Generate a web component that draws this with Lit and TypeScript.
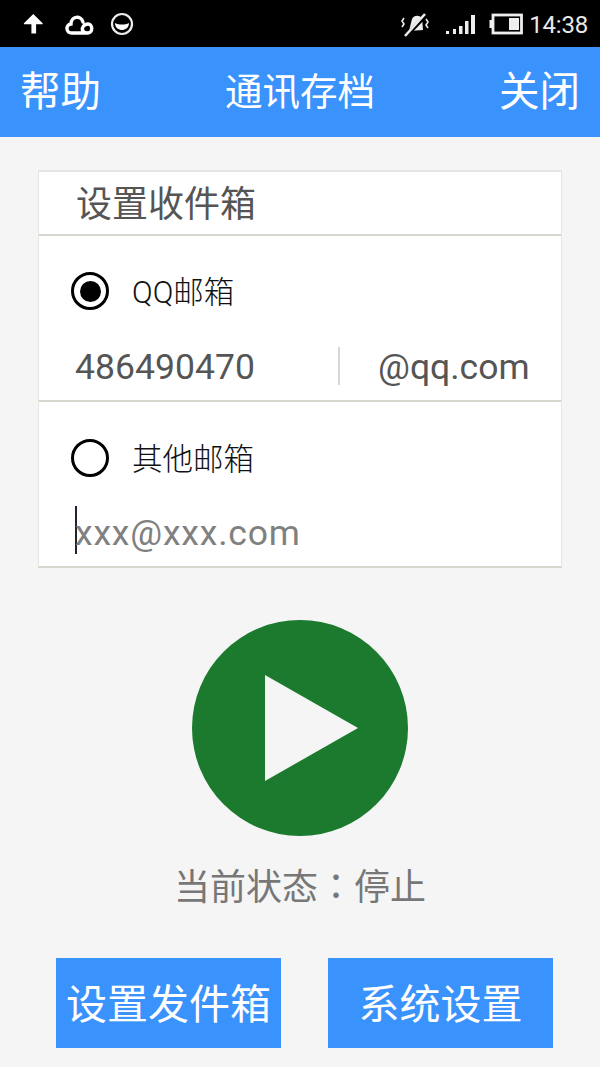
import { LitElement, html, css } from "lit";
import { customElement } from "lit/decorators.js";

@customElement("app-root")
export class AppRoot extends LitElement {
  static styles = css`
    :host { display: block; width: 600px; height: 1067px; background: #f5f5f5; overflow: hidden;
      font-family: Roboto, "Noto Sans CJK SC", sans-serif; }
    .status { height: 47px; background: #000; display: flex; align-items: center; padding: 0 12px 0 21px; color: #eee; }
    .status svg { display: block; flex: none; }
    .spacer { flex: 1; }
    .clock { font-size: 24px; line-height: 50px; margin-left: 6px; height: 47px; letter-spacing: -0.2px; color: #e8e8e8; }
    .bar { height: 90px; background: #3a92fc; display: flex; align-items: center; justify-content: space-between; padding: 0 20px 0 20px; color: #fff; }
    .bar .side { font-size: 40.5px; line-height: 94px; width: 82px; white-space: nowrap; }
    .bar .title { font-size: 37.5px; line-height: 94px; white-space: nowrap; }
    .card { margin: 33px 38px 0; background: #fff; border: 2px solid #d6d6ce; border-left-width: 1px; border-right-width: 1px; height: 398px; box-sizing: border-box; display: flex; flex-direction: column; border-top-color: #e4e4e0; border-left-color: #e4e4e0; border-right-color: #e4e4e0; }
    .head { height: 62px; flex: none; box-sizing: border-box; padding-left: 37px; font-size: 36px; line-height: 67px; color: #555; white-space: nowrap; }
    .sect { border-top: 2px solid #d6d6ce; flex: none; }
    .s1 { height: 166px; box-sizing: border-box; }
    .s2 { flex: 1; }
    .radio-row { display: flex; align-items: center; padding-left: 32px; gap: 23px; height: 112px; box-sizing: border-box; color: #111; white-space: nowrap; }
    .radio-row span { font-size: 30.5px; line-height: 40px; padding-top: 4px; font-weight: 300; }
    .s1 .radio-row { padding-bottom: 2px; }
    .radio { width: 38px; height: 38px; box-sizing: border-box; border: 3.5px solid #000; border-radius: 50%; display: flex; align-items: center; justify-content: center; flex: none; }
    .dot { width: 21px; height: 21px; background: #000; border-radius: 50%; }
    .entry { display: flex; align-items: center; height: 52px; padding-left: 36px; font-size: 35.5px; color: #555; white-space: nowrap; }
    .num { width: 263px; flex: none; padding-top: 2px; letter-spacing: 0.05px; }
    .vline { width: 2px; height: 38px; background: #d8d8d2; flex: none; }
    .dom { margin-left: 38px; padding-top: 2px; }
    .s1 .entry { margin-top: -8px; }
    .s2 .entry { margin-top: -10px; color: #808080; }
    .hint { letter-spacing: 0.8px; padding-top: 6px; }
    .caret { width: 2px; height: 48px; background: #223; flex: none; margin-right: -2px; }
    .play { display: block; margin: 52px auto 0; }
    .state { text-align: center; font-size: 36px; line-height: 46px; color: #777; margin-top: 25px; height: 50px; }
    .colon { font-family: "Noto Sans CJK TC", sans-serif; }
    .btns { display: flex; gap: 47px; margin: 47px 0 0 56px; }
    .btn { width: 225px; height: 90px; background: #3a92fc; color: #fff; font-size: 41px; line-height: 95px; text-align: center; white-space: nowrap; }
  `;

  render() {
    return html`
      <div class="status">
        <svg width="24" height="24" viewBox="0 0 24 24"><path d="M12 2 L22 12 L22 13 L15 13 L15 23 L10 23 L10 13 L2 13 L2 12Z" fill="#fff" transform="translate(1 0) scale(.94)"/></svg>
        <svg style="margin-left:18px" width="32" height="24" viewBox="0 0 32 24" fill="none" stroke="#fff" stroke-width="3.4" stroke-linecap="round"><path d="M9 21 C3 21 2 13 8 12 C8 4 18 3 20 10 M9 21 L25 21 C30 21 30 12 25 12 C21 12 18 16 20 19 C21 21 24 21 25 21"/></svg>
        <svg style="margin-left:15px" width="24" height="24" viewBox="0 0 24 24"><circle cx="12" cy="12" r="10" fill="none" stroke="#eee" stroke-width="2.2"/><path d="M5 11 C9 13 15 13 19 11 C19 16 15 18 12 18 C9 18 5 16 5 11Z" fill="#fff"/></svg>
        <div class="spacer"></div>
        <svg width="28" height="28" viewBox="0 0 28 28" fill="none" stroke="#eee"><path d="M8 21 L11 9 C13 5 18 5 21 8 L22 20Z" fill="#eee" stroke="none"/><path d="M6 25 L25 5" stroke="#000" stroke-width="4"/><path d="M4 26 L24 4" stroke-width="2.6"/><path d="M3 8 L1 11 L3 14 L1 17 M25 9 L27 12 L25 15 L27 18" stroke-width="1.6"/></svg>
        <svg style="margin-left:16px" width="32" height="24" viewBox="0 0 32 24" fill="#eee"><rect x="1" y="19" width="3" height="3"/><rect x="8" y="17" width="3" height="5"/><rect x="14" y="14" width="3.5" height="8"/><rect x="20" y="9" width="3.5" height="13"/><rect x="26" y="3" width="4" height="19"/></svg>
        <svg style="margin-left:12px" width="34" height="24" viewBox="0 0 34 24"><rect x="4" y="3" width="28.5" height="18" fill="none" stroke="#eee" stroke-width="2.8"/><rect x="0.5" y="8" width="3" height="8" fill="#eee"/><rect x="20" y="6" width="10" height="12" fill="#eee"/></svg>
        <span class="clock">14:38</span>
      </div>
      <div class="bar">
        <span class="side">帮助</span>
        <span class="title">通讯存档</span>
        <span class="side" style="text-align:right">关闭</span>
      </div>
      <div class="card">
        <div class="head">设置收件箱</div>
        <div class="sect s1">
          <div class="radio-row"><div class="radio"><div class="dot"></div></div><span>QQ邮箱</span></div>
          <div class="entry"><span class="num">486490470</span><span class="vline"></span><span class="dom">@qq.com</span></div>
        </div>
        <div class="sect s2">
          <div class="radio-row"><div class="radio"></div><span>其他邮箱</span></div>
          <div class="entry"><span class="caret"></span><span class="hint">xxx@xxx.com</span></div>
        </div>
      </div>
      <svg class="play" width="216" height="216" viewBox="0 0 216 216"><circle cx="108" cy="108" r="108" fill="#1c7a2e"/><path d="M73 55 L166 108 L73 161Z" fill="#f5f5f5"/></svg>
      <div class="state">当前状态<span class="colon">：</span>停止</div>
      <div class="btns"><div class="btn">设置发件箱</div><div class="btn">系统设置</div></div>
    `;
  }
}
